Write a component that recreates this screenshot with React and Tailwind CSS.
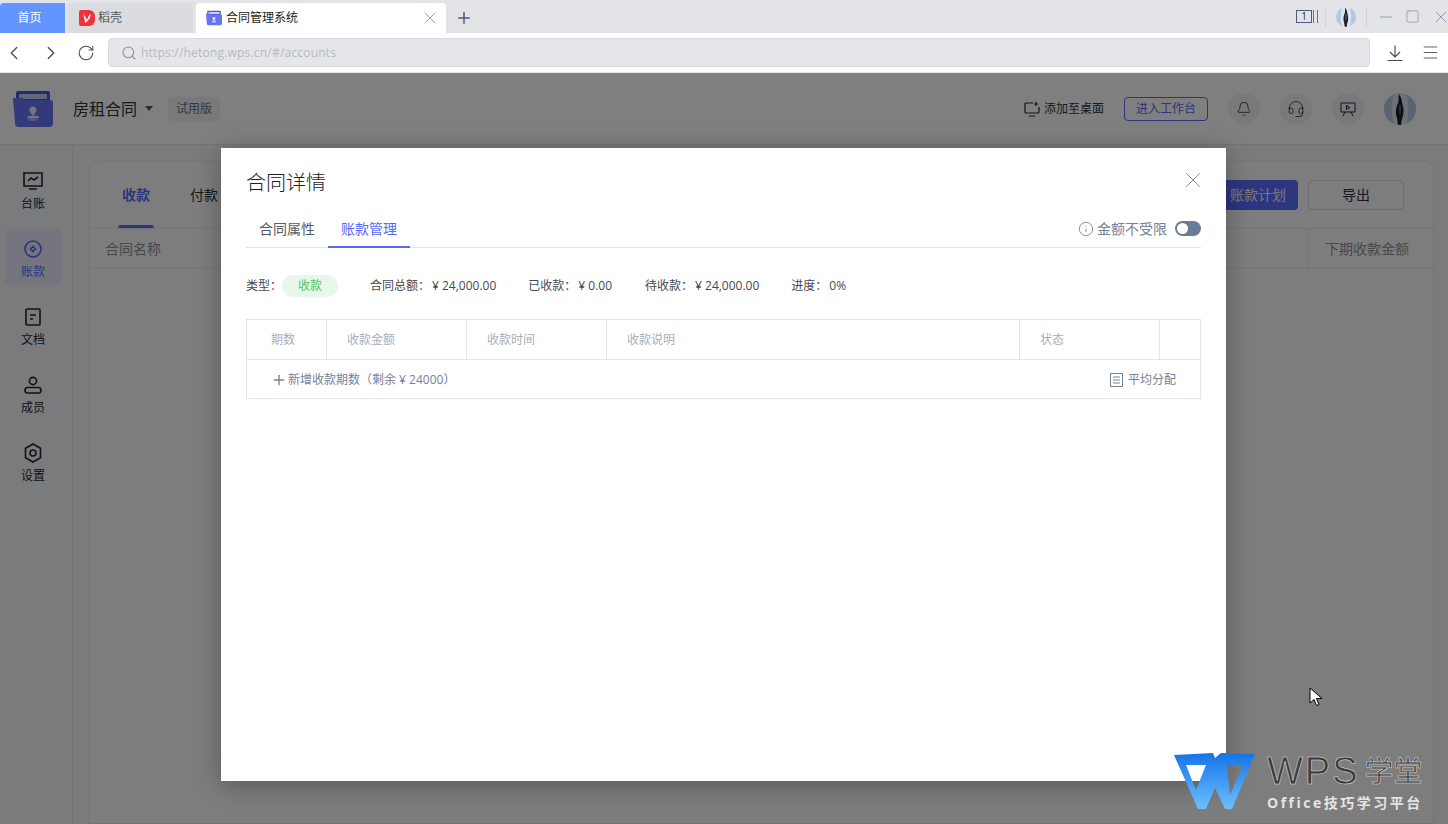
import { ChevronLeft, ChevronRight, RotateCw, Search, X, Plus, Minus, Square, Menu, Bell, Headset, Info } from "lucide-react"

function FolderLogo({ size = 40 }) {
  return (
    <svg width={size} height={size} viewBox="0 0 40 40">
      <path d="M5 2h30a2 2 0 0 1 2 2v9H3V4a2 2 0 0 1 2-2z" fill="#4b57d8" />
      <rect x="6" y="5" width="28" height="5" rx="1" fill="#c9cdf5" />
      <path d="M0 9l10 0 3 2h24a3 3 0 0 1 3 3v20a4 4 0 0 1-4 4H6a4 4 0 0 1-4-4z" fill="#6674f2" />
      <circle cx="20" cy="21" r="3.5" fill="#e6e8fd" />
      <path d="M18.500 23.500h3v3h-3z" fill="#e6e8fd" />
      <rect x="14.500" y="27" width="11" height="2.500" rx="1.200" fill="#e6e8fd" />
      <rect x="16" y="30.500" width="8" height="1" fill="#e6e8fd" />
    </svg>
  )
}

function Avatar({ size }) {
  return (
    <svg width={size} height={size} viewBox="0 0 32 32" className="rounded-full shrink-0">
      <rect width="32" height="32" fill="#dbe4f4" />
      <path d="M0 0h10c-3 10-3 22 0 32H0z" fill="#b6c5e2" />
      <path d="M32 0h-10c3 10 3 22 0 32h10z" fill="#b6c5e2" />
      <path d="M15 1c2 3 3 6 3 9 2 5 2 12 0 16l-1 6h-3l-1-7c-2-5-1-11 1-15 1-2 0-6 1-9z" fill="#1f2024" />
      <path d="M15 12l2 0 0 8-2 1z" fill="#5a5d66" />
    </svg>
  )
}

function SideItem({ label, active, children }) {
  return (
    <div className={`w-14 h-14 mb-3 pt-[11px] rounded flex flex-col items-center gap-1.5 ${active ? "bg-[#e8ebff] text-[#5b6bff]" : "text-[#24262c]"}`}>
      <div className="h-[18px] flex items-center justify-center">{children}</div>
      <span className="text-xs leading-4">{label}</span>
    </div>
  )
}

function RoundIcon({ children }) {
  return (
    <div className="w-8 h-8 rounded-full bg-[#f2f3f7] flex items-center justify-center text-[#24262c]">{children}</div>
  )
}

export default function App() {
  return (
    <div className="h-screen w-full overflow-hidden flex flex-col bg-white [font-family:'Open_Sans','Noto_Sans_CJK_SC',sans-serif]">
      {/* tab strip */}
      <div className="h-[33px] bg-[#e3e4e8] flex items-end shrink-0">
        <div className="w-[65px] h-[30px] pr-[6px] bg-[#6394ff] rounded-tl text-white text-xs flex items-center justify-center">首页</div>
        <div className="w-[125px] h-[30px] ml-[3px] bg-[#dbdce0] rounded-t flex items-center pl-[11px] gap-[3px] text-xs text-[#55585f]">
          <svg width="16" height="16" viewBox="0 0 16 16" className="shrink-0">
            <path d="M0 2a2 2 0 0 1 2-2h8a6 6 0 0 1 6 6v4a6 6 0 0 1-6 6H2a2 2 0 0 1-2-2z" fill="#f0323c" />
            <path d="M4 4c1 3 2 6 2 9 2-1 5-4 6-9-2 1-3 3-4 6-1-2-2-4-4-6z" fill="#fff" />
          </svg>
          稻壳
        </div>
        <div className="w-[250px] h-[30px] ml-[3px] bg-white rounded-t flex items-center pl-[10px] pr-[6px] gap-[4px] text-xs text-[#1c1d20]">
          <FolderLogo size={16} />
          <span className="flex-1">合同管理系统</span>
          <X size={20} strokeWidth={0.9} className="text-[#75819b]" />
        </div>
        <div className="w-9 h-[30px] flex items-center justify-center text-[#4d5a78]">
          <Plus size={18} strokeWidth={2} />
        </div>
        <div className="flex-1" />
        <div className="h-[33px] flex items-center mr-[-3px] text-[#7d8aa5]">
          <div className="w-4 h-[13px] border border-[#4d5a78] text-[10px] leading-[11px] text-center text-[#30333a] mr-px">1</div>
          <div className="w-[5px] h-[13px] border-x border-[#6b7280] mr-[7px]" />
          <div className="w-px h-5 bg-[#d0d2d8] mr-[10px]" />
          <Avatar size={20} />
          <div className="w-px h-5 bg-[#d0d2d8] ml-[10px] mr-[9px]" />
          <Minus size={20} strokeWidth={0.9} className="mr-[9px]" />
          <Square size={15} strokeWidth={1.1} className="mr-[11px]" />
          <X size={20} strokeWidth={0.9} />
        </div>
      </div>

      {/* address bar */}
      <div className="h-10 bg-white border-b border-[#e4e5e9] flex items-center shrink-0 text-[#4a4a4a]">
        <ChevronLeft size={22} strokeWidth={1.4} className="ml-[3px]" />
        <ChevronRight size={22} strokeWidth={1.4} className="ml-[15px]" />
        <RotateCw size={18} strokeWidth={1.4} className="ml-[15px]" />
        <div className="ml-[13px] w-[1262px] h-[29px] bg-[#e5e6ea] border border-[#d8d9de] rounded flex items-center pl-[12px] gap-[4px] text-xs tracking-[0.2px] text-[#b7b9c0]">
          <Search size={16} strokeWidth={1.6} className="text-[#8c8f96]" />
          https://hetong.wps.cn/#/accounts
        </div>
        <svg width="16" height="16" viewBox="0 0 16 16" fill="none" stroke="currentColor" strokeWidth="1.1" className="ml-[17px]">
          <path d="M8 .5v11M3 7l5 5 5-5M.5 15.500h15" />
        </svg>
        <Menu size={19} strokeWidth={1.1} className="ml-[18px]" />
      </div>

      {/* app behind the dialog */}
      <div className="flex-1 relative flex flex-col bg-white">
        <header className="h-[72px] flex items-center shrink-0 border-b border-[#e8e9ee]">
          <div className="ml-[13px]"><FolderLogo size={40} /></div>
          <span className="ml-[20px] text-base text-[#30333a]">房租合同</span>
          <span className="ml-2 w-0 h-0 border-x-[4px] border-x-transparent border-t-[5px] border-t-[#55585f]" />
          <span className="ml-[15px] w-[52px] h-6 rounded bg-[#f2f3f6] text-xs text-[#6b6e78] flex items-center justify-center">试用版</span>
          <div className="flex-1" />
          <svg width="16" height="16" viewBox="0 0 16 16" fill="none" stroke="#24262c" strokeWidth="1.2">
            <path d="M9 2H2a1 1 0 0 0-1 1v8a1 1 0 0 0 1 1h12a1 1 0 0 0 1-1V6M5 15h6M12 1v4M10 3h4" />
          </svg>
          <span className="ml-[4px] text-xs text-[#30333a]">添加至桌面</span>
          <div className="ml-5 w-[84px] h-6 rounded border border-[#5b6bff] text-xs text-[#5b6bff] flex items-center justify-center">进入工作台</div>
          <div className="ml-5 flex items-center gap-[20px] mr-4">
            <RoundIcon><Bell size={16} strokeWidth={1.2} /></RoundIcon>
            <RoundIcon><Headset size={18} strokeWidth={1.1} /></RoundIcon>
            <RoundIcon>
              <svg width="16" height="16" viewBox="0 0 16 16" fill="none" stroke="currentColor" strokeWidth="1">
                <path d="M1 2h14v9H1zM5 11l-2 4M11 11l2 4" />
                <path d="M6.500 4.500l3.500 2-3.500 2z" />
              </svg>
            </RoundIcon>
            <Avatar size={32} />
          </div>
          <div className="w-4" />
        </header>

        <div className="flex-1 flex min-h-0">
          <aside className="w-[73px] bg-[#f5f6fa] border-r border-[#e8e9ee] flex flex-col items-start pl-[5px] pt-[16px] shrink-0">
            <SideItem label="台账">
              <svg width="20" height="18" viewBox="0 0 20 18" fill="none" stroke="currentColor" strokeWidth="1.6"><path d="M1 1h18v13H1zM6 17h8" /><path d="M5 9l3-3 3 2 4-3" /></svg>
            </SideItem>
            <SideItem label="账款" active>
              <svg width="18" height="18" viewBox="0 0 18 18" fill="none" stroke="currentColor" strokeWidth="1.6"><circle cx="9" cy="9" r="8" /><path d="M9 6.500L11.500 9 9 11.500 6.500 9z" /></svg>
            </SideItem>
            <SideItem label="文档">
              <svg width="16" height="18" viewBox="0 0 16 18" fill="none" stroke="currentColor" strokeWidth="1.6"><rect x="1" y="1" width="14" height="16" rx="1" /><path d="M5 7h6M5 11h3" /></svg>
            </SideItem>
            <SideItem label="成员">
              <svg width="18" height="18" viewBox="0 0 18 18" fill="none" stroke="currentColor" strokeWidth="1.6"><circle cx="9" cy="5" r="3.600" /><rect x="1" y="11.500" width="16" height="5.500" rx="2.700" /></svg>
            </SideItem>
            <SideItem label="设置">
              <svg width="18" height="20" viewBox="0 0 18 20" fill="none" stroke="currentColor" strokeWidth="1.6"><path d="M9 1l7.500 4.200v9.600L9 19l-7.500-4.200V5.200z" /><circle cx="9" cy="10" r="3" /></svg>
            </SideItem>
          </aside>
          <main className="flex-1 bg-[#f5f6fa] pl-4 pr-[14px] pt-4 min-w-0">
            <div className="h-full bg-[#fafafc] border border-[#e8e9ee] rounded-t-lg">
              <div className="h-[67px] flex items-center border-b border-[#e8e9ee] pr-[29px]">
                <div className="ml-8 h-full flex items-center relative text-sm font-bold text-[#5b6bff]">
                  收款
                  <span className="absolute -left-1 -right-1 bottom-0 h-[3px] bg-[#5b6bff] rounded-t" />
                </div>
                <div className="ml-10 text-sm text-[#30333a]">付款</div>
                <div className="flex-1" />
                <div className="w-[120px] h-[30px] rounded-sm bg-[#5b6bff] text-sm text-[#f0f0ff] flex items-center justify-end pr-3">账款计划</div>
                <div className="ml-[10px] w-24 h-[30px] rounded-sm border border-[#d8d9de] text-sm text-[#30333a] flex items-center justify-center">导出</div>
              </div>
              <div className="h-10 flex items-center border-b border-[#e8e9ee] text-sm text-[#8d909a]">
                <span className="ml-[15px] flex-1">合同名称</span>
                <span className="w-[125px] h-full border-l border-[#e8e9ee] flex items-center pl-4">下期收款金额</span>
              </div>
            </div>
          </main>
        </div>

        {/* dialog overlay */}
        <div className="absolute inset-0 bg-black/50 flex items-start justify-center pt-[75px] pr-px">
          <div className="w-[1005px] h-[633px] bg-white shadow-[0_4px_24px_rgba(0,0,0,0.3)] px-[25px] pt-[22px] text-[#30333a]">
            <div className="flex items-center justify-between h-[26px]">
              <span className="text-xl leading-[26px] font-light text-[#1c1d20]">合同详情</span>
              <X size={26} strokeWidth={0.8} className="text-[#75819b] -mt-[6px] -mr-[5px]" />
            </div>
            <div className="mt-[15px] h-[37px] flex border-b border-[#e4e5ea] text-sm">
              <div className="w-[82px] h-[37px] pb-[2px] flex items-center justify-center text-[#555a66]">合同属性</div>
              <div className="w-[82px] h-[37px] flex items-center justify-center text-[#5468ff] border-b-2 border-[#5468ff]">账款管理</div>
              <div className="flex-1" />
              <div className="flex items-center h-[37px] pb-[2px] text-[#75819b]">
                <Info size={16} strokeWidth={1.3} />
                <span className="ml-[3px]">金额不受限</span>
                <div className="ml-2 w-[26px] h-[15px] rounded-full bg-[#6b7a99] flex items-center pl-[2px]">
                  <span className="w-[11px] h-[11px] rounded-full bg-white" />
                </div>
              </div>
            </div>
            <div className="mt-[26px] h-[24px] flex items-center text-xs text-[#45484f]">
              <span>类型：</span>
              <span className="w-[56px] h-[22px] rounded-full bg-[#e8f7ec] text-[#4cc46a] flex items-center justify-center">收款</span>
              <span className="ml-8 flex gap-[2px]"><span>合同总额：</span><span>¥ 24,000.00</span></span>
              <span className="ml-8 flex gap-[2px]"><span>已收款：</span><span>¥ 0.00</span></span>
              <span className="ml-[33px] flex gap-[2px]"><span>待收款：</span><span>¥ 24,000.00</span></span>
              <span className="ml-8 flex gap-[2px]"><span>进度：</span><span>0%</span></span>
            </div>
            <div className="mt-[21px] border border-[#e4e5ea] text-xs">
              <div className="h-10 flex border-b border-[#e4e5ea] text-[#a9adb8]">
                <div className="w-[80px] border-r border-[#e4e5ea] flex items-center pl-6">期数</div>
                <div className="w-[140px] border-r border-[#e4e5ea] flex items-center pl-5">收款金额</div>
                <div className="w-[140px] border-r border-[#e4e5ea] flex items-center pl-5">收款时间</div>
                <div className="w-[413px] border-r border-[#e4e5ea] flex items-center pl-5">收款说明</div>
                <div className="w-[140px] border-r border-[#e4e5ea] flex items-center pl-5">状态</div>
              </div>
              <div className="h-[38px] flex items-center justify-between pl-[24px] pr-6 pt-px text-[#75819b]">
                <div className="flex items-center gap-[1px]">
                  <Plus size={16} strokeWidth={2} />
                  <span>新增收款期数（剩余 ¥ 24000）</span>
                </div>
                <div className="flex items-center gap-[5px]">
                  <svg width="13" height="14" viewBox="0 0 13 14" fill="none" stroke="currentColor"><path d="M.5.500h12v13H.5zM3 4h7M3 7h7M3 10h7" /></svg>
                  <span>平均分配</span>
                </div>
              </div>
            </div>
          </div>
        </div>

        {/* mouse pointer */}
        <svg width="14" height="20" viewBox="0 0 14 20" className="absolute left-[1309px] top-[614px]">
          <path d="M1 1v15l4-3.500 2.500 6 2.500-1-2.500-6H13z" fill="#fff" stroke="#000" strokeWidth="1" />
        </svg>

        {/* watermark */}
        <div className="absolute left-[1174px] top-[680px] flex items-start">
          <svg width="82" height="57" viewBox="0 0 82 57">
            <defs>
              <linearGradient id="wps" x1="0" y1="0" x2="0" y2="1">
                <stop offset="0" stopColor="#1474e6" />
                <stop offset="1" stopColor="#6cc0ff" />
              </linearGradient>
            </defs>
            <path fillRule="evenodd" d="M0 2L39 0l2 5 6-5 34 1-23 55h-7L41 35 32 56h-8zM12 12h20L22 37zM53 12h16L56 42z" fill="url(#wps)" />
          </svg>
          <div className="ml-[11px] flex flex-col items-start">
            <div className="flex items-center h-[36px]">
              <span className="[font-family:'Liberation_Sans',sans-serif] text-[38px] leading-[36px] tracking-[2px] text-[#3c3c3c] [-webkit-text-stroke:0.5px_#e0e0e0]">WPS</span>
              <span className="ml-[5px] text-[29px] leading-[36px] text-[#3c3c3c] [-webkit-text-stroke:0.5px_#e0e0e0]">学堂</span>
            </div>
            <span className="text-[14px] leading-[18px] mt-[5px] tracking-[2.5px] text-[#e4e4e4] font-bold">Office技巧学习平台</span>
          </div>
        </div>
      </div>
    </div>
  )
}
